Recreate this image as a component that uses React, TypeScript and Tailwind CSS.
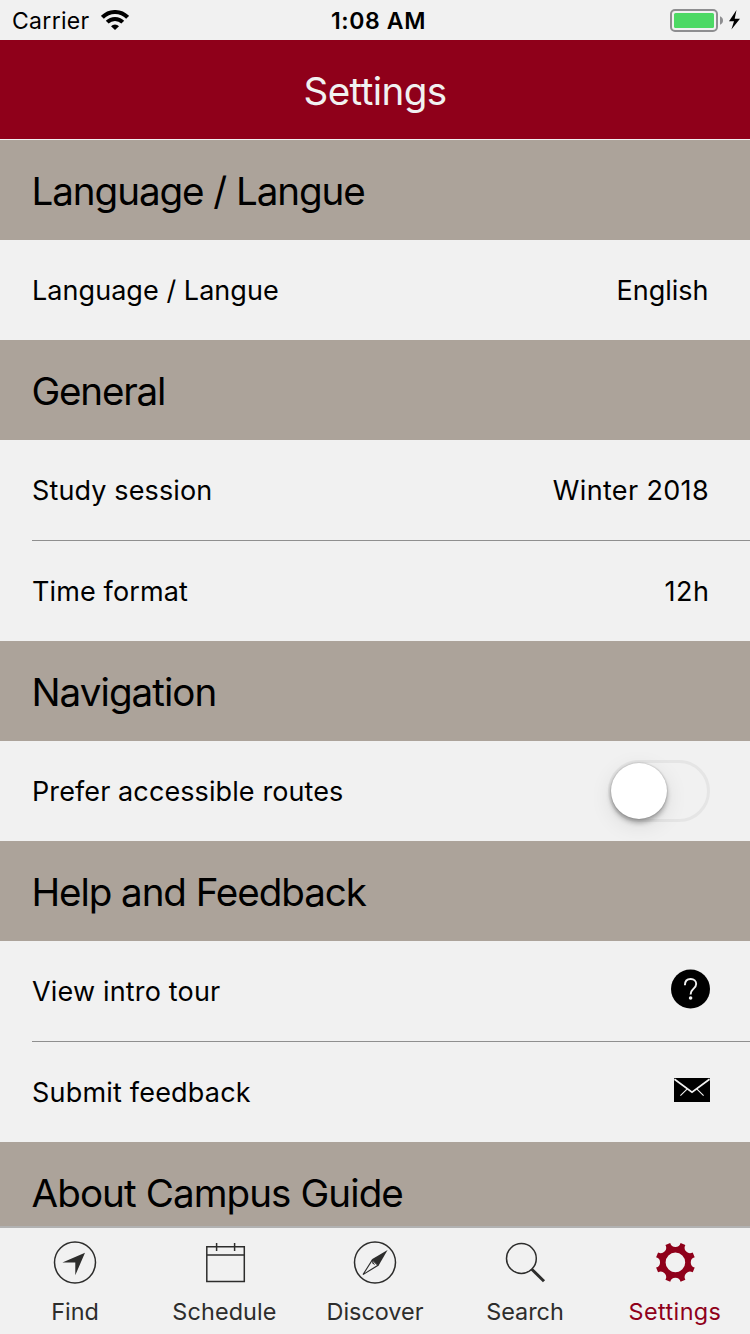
import type { ReactNode } from 'react';

function StatusBar() {
  return (
    <div className="grid h-10 shrink-0 grid-cols-3 items-center text-[23px] text-black">
      <div className="flex items-center gap-[11px] pl-3">
        <span className="pt-[2px] tracking-[0.3px]">Carrier</span>
        <svg width="28" height="20" viewBox="0 0 28 20" fill="none" stroke="#000" strokeWidth="4">
          <path d="M1.4 7.3A17.6 17.6 0 0 1 26.6 7.3" />
          <path d="M6.2 12.2A11 11 0 0 1 21.8 12.2" />
          <path d="M14 20L10 16.2A5.8 5.8 0 0 1 18 16.2Z" fill="#000" stroke="none" />
        </svg>
      </div>
      <span className="pt-[2px] pl-[7px] text-center font-semibold tracking-[0.6px]">1:08 AM</span>
      <div className="flex justify-end pr-2">
        <svg width="72" height="24" viewBox="0 0 72 24">
          <rect x="1" y="2" width="46" height="21" rx="4" fill="none" stroke="#8e8e90" strokeWidth="2" />
          <rect x="4" y="5" width="40" height="15" rx="1.5" fill="#4cd964" />
          <path d="M50 8.3Q53 9.5 53 12.5T50 16.7Z" fill="#8e8e90" />
          <path d="M66.5 2L59 13.2H64L61.4 21.6L70 10.8H64.7Z" fill="#000" />
        </svg>
      </div>
    </div>
  );
}

function SectionHeader({ title, spacing }: { title: string; spacing: string }) {
  return (
    <h2 className="flex h-[100px] shrink-0 items-center bg-[#aca39a] pt-1 pl-[31.5px] text-[38.6px] whitespace-nowrap text-black">
      <span className={spacing}>{title}</span>
    </h2>
  );
}

function Row({ label, spacing, children }: { label: string; spacing: string; children: ReactNode }) {
  return (
    <div className="flex h-[100px] shrink-0 items-center justify-between pr-10 pl-8 text-[27px] whitespace-nowrap text-black">
      <span className={`pt-[2px] ${spacing}`}>{label}</span>
      {children}
    </div>
  );
}

function Separator() {
  return <div className="ml-8 h-px shrink-0 bg-[#8f8f8f]" />;
}

function Toggle() {
  return (
    <div className="flex h-[62px] w-[102px] items-center rounded-full border-[3px] border-[#e5e5e5]">
      <div className="size-[56px] rounded-full bg-white shadow-[0_4px_5px_rgba(0,0,0,0.28),0_0_2px_rgba(0,0,0,0.3),0_6px_22px_rgba(0,0,0,0.10)]" />
    </div>
  );
}

function HelpIcon() {
  return (
    <svg className="-mt-1" width="40" height="40" viewBox="0 0 40 40">
      <circle cx="20.5" cy="20" r="19.5" />
      <path
        d="M14.9 16.2C14.9 12.2 17.3 10 20.7 10C24 10 26.2 12.1 26.2 15C26.2 17.6 24.7 18.8 23 20.3C21.2 21.9 20.6 22.9 20.6 25.5"
        fill="none"
        stroke="#f1f1f1"
        strokeWidth="1.9"
      />
      <circle cx="20.6" cy="29" r="1.8" fill="#f1f1f1" />
    </svg>
  );
}

function MailIcon() {
  return (
    <svg className="-mt-1" width="36" height="24" viewBox="0 0 36 24">
      <rect width="36" height="24" rx="0.6" />
      <path d="M0.5 1.2L18 14.2L35.5 1.2" fill="none" stroke="#f1f1f1" strokeWidth="1.7" />
      <path d="M13.3 10.8L6.4 17.6M22.7 10.8L29.6 17.6" fill="none" stroke="#f1f1f1" strokeWidth="1.1" />
    </svg>
  );
}

function Tab({ label, spacing, color, children }: { label: string; spacing: string; color: string; children: ReactNode }) {
  return (
    <div className={`flex w-[150px] flex-col items-center pt-[10px] ${color}`}>
      <svg width="50" height="50" viewBox="0 0 50 50" fill="none" stroke="currentColor" strokeWidth="1.5">
        {children}
      </svg>
      <span className={`mt-[9px] text-[23.4px] leading-[30px] ${spacing}`}>{label}</span>
    </div>
  );
}

export default function App() {
  return (
    <div className="flex h-[1334px] w-[750px] flex-col overflow-hidden bg-[#f1f1f1] font-['Inter','Liberation_Sans',sans-serif]">
      <StatusBar />
      <header className="mb-px flex h-[99px] shrink-0 items-center justify-center bg-[#8f001a] pt-1 text-[38.6px] text-[#f1f1f1]">
        <h1 className="tracking-[-0.6px]">Settings</h1>
      </header>
      <main className="flex h-[1086px] shrink-0 flex-col overflow-hidden">
        <SectionHeader title="Language / Langue" spacing="tracking-[-1.07px]" />
        <Row label="Language / Langue" spacing="tracking-[0.05px]">
          <span className="pt-[2px] pr-[1.5px]">English</span>
        </Row>
        <SectionHeader title="General" spacing="tracking-[-1.2px]" />
        <Row label="Study session" spacing="tracking-[0.12px]">
          <span className="pt-[2px] pr-px tracking-[0.35px]">Winter 2018</span>
        </Row>
        <Separator />
        <Row label="Time format" spacing="tracking-[0.13px]">
          <span className="pt-[2px] pr-[0.5px] tracking-[0.5px]">12h</span>
        </Row>
        <SectionHeader title="Navigation" spacing="tracking-[-0.95px]" />
        <Row label="Prefer accessible routes" spacing="tracking-[0.1px]">
          <Toggle />
        </Row>
        <SectionHeader title="Help and Feedback" spacing="tracking-[-1.08px]" />
        <Row label="View intro tour" spacing="tracking-[0.17px]">
          <HelpIcon />
        </Row>
        <Separator />
        <Row label="Submit feedback" spacing="tracking-[0.2px]">
          <MailIcon />
        </Row>
        <SectionHeader title="About Campus Guide" spacing="tracking-[-0.92px]" />
      </main>
      <nav className="flex h-[108px] shrink-0 border-t-2 border-[#b2b2b2]">
        <Tab label="Find" spacing="tracking-[0px]" color="text-[#2d2d2c]">
          <circle cx="25" cy="24.5" r="20.5" />
          <path d="M35 14.8L25.3 37.2V24.5H12.4Z" fill="currentColor" stroke="none" />
        </Tab>
        <Tab label="Schedule" spacing="pr-px tracking-[0.12px]" color="text-[#2d2d2c]">
          <path d="M6.8 8.8H44.3V43.5H6.8ZM6.8 17H44.3M16.6 5V13M34.6 5V13" />
        </Tab>
        <Tab label="Discover" spacing="tracking-[0px]" color="text-[#2d2d2c]">
          <circle cx="25" cy="24.5" r="20.5" />
          <path d="M37.6 12L28.6 27.6L21.9 21.3Z" fill="currentColor" stroke="none" />
          <path d="M13 36.6L22.3 21.9L28 27.3Z" strokeWidth="1.1" />
          <path d="M21.8 21.8L25.2 27.2L22.4 25.4Z" fill="currentColor" stroke="none" />
        </Tab>
        <Tab label="Search" spacing="tracking-[0px]" color="text-[#2d2d2c]">
          <circle cx="21.4" cy="20.5" r="14.9" />
          <path d="M31.5 31L44 43.2" strokeWidth="3" />
        </Tab>
        <Tab label="Settings" spacing="tracking-[0.4px]" color="text-[#8f001a]">
          <g transform="translate(25.4 24.4)">
            <path
              fill="currentColor"
              stroke="none"
              fillRule="evenodd"
              d="M-5.2-19.3A5.4 5.4 0 0 0 5.2-19.3L9.97-17.32A5.4 5.4 0 0 0 17.32-9.97L19.3-5.2A5.4 5.4 0 0 0 19.3 5.2L17.32 9.97A5.4 5.4 0 0 0 9.97 17.32L5.2 19.3A5.4 5.4 0 0 0-5.2 19.3L-9.97 17.32A5.4 5.4 0 0 0-17.32 9.97L-19.3 5.2A5.4 5.4 0 0 0-19.3-5.2L-17.32-9.97A5.4 5.4 0 0 0-9.97-17.32ZM0-9.8A9.8 9.8 0 1 0 0 9.8A9.8 9.8 0 1 0 0-9.8Z"
            />
          </g>
        </Tab>
      </nav>
    </div>
  );
}
